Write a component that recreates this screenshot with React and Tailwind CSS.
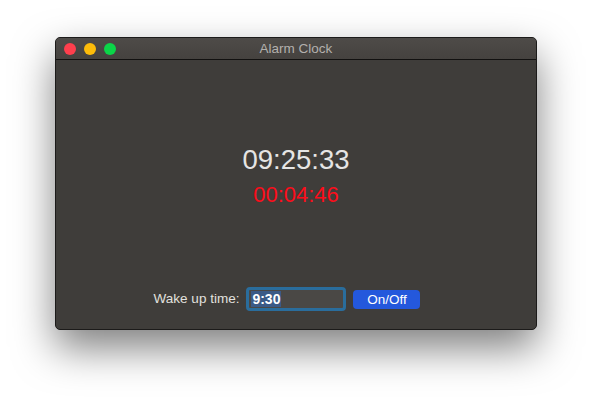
export default function App() {
  return (
    <div className="w-[592px] h-[404px] bg-white overflow-hidden" style={{ fontFamily: '"Liberation Sans", Arial, sans-serif' }}>
      <div className="ml-[55px] mt-[37px] w-[482px] h-[293px] rounded-[5px] border border-[#1c1b1a] bg-[#3f3d3a] flex flex-col overflow-hidden shadow-[0_18px_40px_rgba(0,0,0,0.5)]">
        <div className="relative h-[22px] shrink-0 bg-gradient-to-b from-[#4e4b48] to-[#45423f] border-b border-[#121110] flex items-center">
          <div className="flex items-center gap-[8px] pl-[8px]">
            <span className="w-[12px] h-[12px] rounded-full bg-[#fe3f4d]" />
            <span className="w-[12px] h-[12px] rounded-full bg-[#fdbc0a]" />
            <span className="w-[12px] h-[12px] rounded-full bg-[#0bd548]" />
          </div>
          <div className="absolute inset-0 pt-[2px] flex items-center justify-center text-[13.5px] text-[#b3b0ad]">Alarm Clock</div>
        </div>
        <div className="flex-1 flex flex-col items-center">
          <div className="mt-[84px] h-[32px] leading-[32px] text-[27.5px] text-[#e6e5e4]">09:25:33</div>
          <div className="mt-[7px] h-[24px] leading-[24px] text-[22px] text-[#fc0d1b]">00:04:46</div>
          <div className="mt-[80px] flex items-center h-[24px] mr-[18px]">
            <span className="text-[13.5px] text-[#e2e1df] mr-[7px]">Wake up time:</span>
            <div className="w-[100px] h-[24px] rounded-[4px] border-[3px] border-[#2a6d9c] bg-[#4a4845] flex items-center pl-[2px]">
              <span className="bg-[#3b5a86] text-white text-[14px] font-semibold leading-[16px] px-[1px]">9:30</span>
            </div>
            <button className="ml-[7px] w-[67px] h-[19px] rounded-[4px] bg-[#2458dc] text-white text-[13.5px] leading-[19px] text-center">On/Off</button>
          </div>
        </div>
      </div>
    </div>
  );
}
